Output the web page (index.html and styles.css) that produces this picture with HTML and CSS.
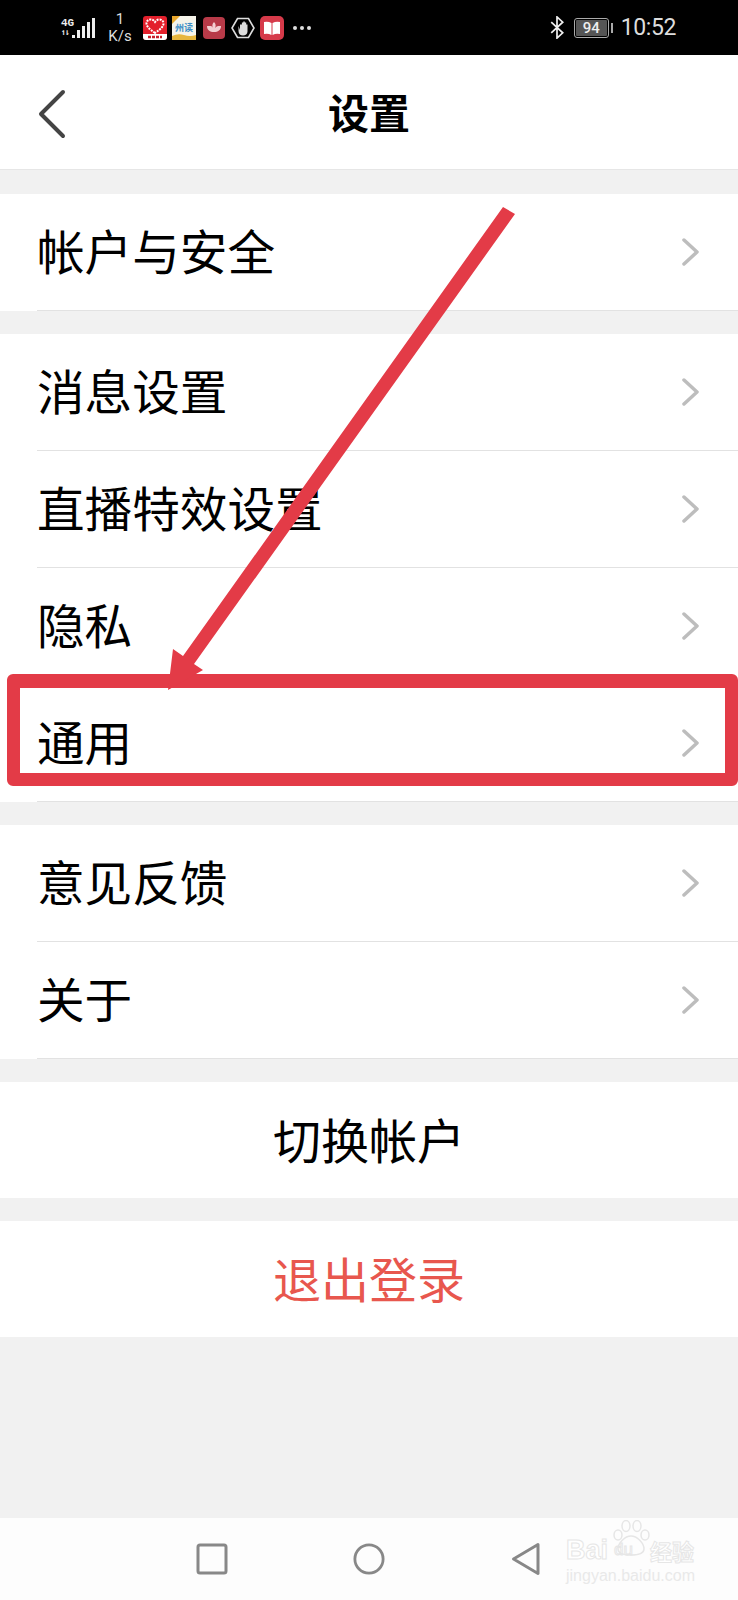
FILE: index.html
```html
<!DOCTYPE html>
<html>
  <head>
    <title>设置</title>
    <link rel="stylesheet" href="styles.css">
  </head>
  <body>
    <div class="phone">
      <div class="status">
        <div class="status-left">
          <div class="signal">
            <div class="net"><span>4G</span><span class="updown">↿⇂</span></div>
            <div class="bars"><i class="b1"></i><i class="b2"></i><i class="b3"></i><i class="b4"></i><i class="b5"></i></div>
          </div>
          <div class="speed"><span>1</span><span>K/s</span></div>
          <div class="apps">
            <svg class="app" viewBox="0 0 24 24"><rect width="24" height="24" rx="3" fill="#e3202c"/><path d="M0 18h24v3a3 3 0 0 1-3 3H3a3 3 0 0 1-3-3z" fill="#fff"/><path d="M12 17C6 13 3.500 10 3.500 7.500 3.500 5 5.500 3.500 7.500 3.500c2 0 3.500 1 4.500 2.500 1-1.500 2.500-2.500 4.500-2.500 2 0 4 1.500 4 4C20.500 10 18 13 12 17z" fill="none" stroke="#fff" stroke-width="2" stroke-dasharray="2 1"/><path d="M5 21h14" stroke="#c9202c" stroke-width="2.500" stroke-dasharray="3 1"/></svg>
            <svg class="app" viewBox="0 0 24 24"><rect width="24" height="24" fill="#f6f4ea"/><path d="M0 0h8L0 8z" fill="#e8a72c"/><text x="12" y="15" class="app-text">州读</text><path d="M0 24v-4q6-3 12-1t12 0v5z" fill="#e6b63e"/></svg>
            <svg class="app app-small" viewBox="0 0 22 22"><rect width="22" height="22" rx="4" fill="#b83a48"/><path d="M11 5c2 2 2 4 1 6 2-2 3-2 4-2 0 0 1 0 2 0 0 4-3 6-7 6s-7-2-7-6c1 0 2 0 3 0 1 0 2 0 3 2-1-2-1-4 1-6z" fill="#f3cfd2"/></svg>
            <svg class="app" viewBox="0 0 24 24"><path d="M6.500 2.500h11L23 12l-5.500 9.500h-11L1 12z" fill="none" stroke="#ddd" stroke-width="1.600"/><path d="M7.500 10v5c0 3 2 4.500 4.500 4.500s4.500-1.500 4.500-4V8.500h-1.300V13V6.500h-1.400V12V5.500h-1.500V12V6.500h-1.400V13V8.500H9V14z" fill="#ddd"/></svg>
            <svg class="app" viewBox="0 0 24 24"><rect width="24" height="24" rx="5" fill="#d63a4a"/><path d="M4 6q4-1 7.500 1v12Q8 17 4 18zM20 6q-4-1-7.500 1v12q3.500-2 7.500-1z" fill="#fff"/></svg>
          </div>
          <div class="more"><i></i><i></i><i></i></div>
        </div>
        <div class="status-right">
          <svg class="bt" viewBox="0 0 14 24"><path d="M1 6.500l12 11L7 23V1l6 5.500-12 11" fill="none" stroke="#eee" stroke-width="1.800"/></svg>
          <div class="battery"><div class="level">94</div></div>
          <div class="cap"></div>
          <div class="clock">10:52</div>
        </div>
      </div>

      <div class="topbar">
        <svg class="back" viewBox="0 0 28 50"><path d="M25 3L3 25l22 22" fill="none" stroke="#444" stroke-width="4" stroke-linecap="round" stroke-linejoin="round"/></svg>
        <h1>设置</h1>
      </div>

      <div class="group first">
        <div class="row"><span>帐户与安全</span><svg class="chev" viewBox="0 0 18 28"><path d="M2 2l13 12L2 26"/></svg></div>
      </div>

      <div class="group">
        <div class="row"><span>消息设置</span><svg class="chev" viewBox="0 0 18 28"><path d="M2 2l13 12L2 26"/></svg></div>
        <div class="row"><span>直播特效设置</span><svg class="chev" viewBox="0 0 18 28"><path d="M2 2l13 12L2 26"/></svg></div>
        <div class="row"><span>隐私</span><svg class="chev" viewBox="0 0 18 28"><path d="M2 2l13 12L2 26"/></svg></div>
        <div class="row"><span>通用</span><svg class="chev" viewBox="0 0 18 28"><path d="M2 2l13 12L2 26"/></svg></div>
      </div>

      <div class="group">
        <div class="row"><span>意见反馈</span><svg class="chev" viewBox="0 0 18 28"><path d="M2 2l13 12L2 26"/></svg></div>
        <div class="row"><span>关于</span><svg class="chev" viewBox="0 0 18 28"><path d="M2 2l13 12L2 26"/></svg></div>
      </div>

      <div class="group">
        <div class="action">切换帐户</div>
      </div>

      <div class="group">
        <div class="action logout">退出登录</div>
      </div>

      <div class="filler"></div>

      <div class="navbar">
        <svg class="nav-icon" viewBox="0 0 32 32"><rect x="2" y="2" width="28" height="28" rx="2"/></svg>
        <svg class="nav-icon" viewBox="0 0 34 34"><circle cx="17" cy="17" r="15"/></svg>
        <svg class="nav-icon" viewBox="0 0 30 34"><path d="M27 2.500L2.500 17 27 31.500z" stroke-linejoin="round"/></svg>
      </div>

      <div class="watermark">
        <svg class="paw" viewBox="0 0 40 36"><g fill="none" stroke="#e6e6e6" stroke-width="1.500"><ellipse cx="7" cy="15" rx="4" ry="5"/><ellipse cx="15" cy="6" rx="4" ry="5.500"/><ellipse cx="26" cy="6" rx="4" ry="5.500"/><ellipse cx="34" cy="15" rx="4" ry="5"/><path d="M20 16c6 0 13 7 13 13 0 5-6 6-13 6S7 34 7 29c0-6 7-13 13-13z"/></g></svg>
        <div class="wm-top"><span class="wm-bai">Bai</span><span class="wm-du">du</span><span class="wm-cn">经验</span></div>
        <div class="wm-bottom">jingyan.baidu.com</div>
      </div>

      <div class="highlight"></div>
      <svg class="arrow" viewBox="0 0 738 1600"><polygon points="503,207 515,214 194,664 203,670 168,690 173,649 183,656" fill="#e33b47"/></svg>
    </div>
  </body>
</html>
```

FILE: styles.css
```css
body {
  margin: 0;
  background-color: #f1f1f1;
  font-family: "Noto Sans CJK SC", "Liberation Sans", sans-serif;
}

.phone {
  position: relative;
  width: 738px;
  height: 1600px;
  display: flex;
  flex-direction: column;
  overflow: hidden;
}

/* status bar */
.status {
  height: 55px;
  background-color: #000;
  color: #ddd;
  display: flex;
  justify-content: space-between;
  align-items: center;
  padding: 0 62px 0 61px;
  flex-shrink: 0;
}

.status-left, .status-right, .signal, .apps, .more {
  display: flex;
  align-items: center;
}

.net {
  display: flex;
  flex-direction: column;
  font: bold 11px/11px "Liberation Mono", monospace;
  width: 11px;
  color: #eee;
}

.updown {
  font-size: 9px;
  line-height: 9px;
  letter-spacing: -2px;
}

.bars {
  display: flex;
  align-items: flex-end;
  gap: 2px;
  height: 20px;
  margin-top: 1px;
}

.bars i {
  width: 3px;
  background-color: #eee;
}

.bars .b1 { height: 3px; }
.bars .b2 { height: 8px; }
.bars .b3 { height: 12px; }
.bars .b4 { height: 16px; }
.bars .b5 { height: 20px; }

.speed {
  display: flex;
  flex-direction: column;
  align-items: center;
  font: 15px/17px "Roboto", sans-serif;
  width: 24px;
  margin-left: 13px;
}

.apps {
  gap: 5px;
  margin-left: 11px;
}

.app {
  width: 24px;
  height: 24px;
}

.app-small {
  width: 22px;
  height: 22px;
  margin: 0 1px 0 2px;
}

.app-text {
  font-size: 9px;
  font-weight: bold;
  fill: #3d8ec6;
  text-anchor: middle;
}

.more {
  gap: 3px;
  margin-left: 9px;
}

.more i {
  width: 4px;
  height: 4px;
  border-radius: 50%;
  background-color: #ddd;
}

.bt {
  width: 14px;
  height: 23px;
  margin-right: 10px;
}

.battery {
  width: 35px;
  height: 20px;
  border: 1px solid #aaa;
  border-radius: 3px;
  padding: 1px;
  box-sizing: border-box;
}

.level {
  height: 100%;
  background-color: #555;
  color: #eee;
  font: 500 15px/16px "Roboto", sans-serif;
  text-align: center;
  border-radius: 1px;
}

.cap {
  width: 2px;
  height: 10px;
  background-color: #aaa;
  margin: 0 8px 0 2px;
}

.clock {
  font: 23px/24px "Roboto", sans-serif;
  letter-spacing: -0.4px;
  color: #ddd;
}

/* header */
.topbar {
  height: 114px;
  background-color: #fff;
  border-bottom: 1px solid #e6e6e6;
  display: flex;
  align-items: center;
  justify-content: center;
  position: relative;
  flex-shrink: 0;
}

.topbar h1 {
  margin: 0 0 2px;
  font-size: 41px;
  font-weight: bold;
  line-height: 1;
  color: #000;
}

.back {
  position: absolute;
  left: 38px;
  top: 34px;
  width: 28px;
  height: 50px;
}

/* list */
.group {
  margin-top: 23px;
  background-color: #fff;
  flex-shrink: 0;
}

.group.first {
  margin-top: 24px;
}

.row {
  height: 117px;
  margin-left: 37px;
  padding-right: 38px;
  box-sizing: border-box;
  border-bottom: 1px solid #e2e2e2;
  display: flex;
  align-items: center;
  justify-content: space-between;
  font-size: 47.6px;
  color: #000;
}

.row span {
  line-height: 1;
  margin-bottom: 5px;
}

.chev {
  width: 18px;
  height: 28px;
}

.chev path {
  fill: none;
  stroke: #bdbdbd;
  stroke-width: 3.500;
  stroke-linecap: round;
  stroke-linejoin: round;
}

.action {
  height: 116px;
  padding-bottom: 5px;
  box-sizing: border-box;
  display: flex;
  align-items: center;
  justify-content: center;
  font-size: 48px;
  color: #000;
}

.logout {
  color: #e8574e;
}

.filler {
  flex: 1;
}

/* bottom nav */
.navbar {
  height: 82px;
  background-color: #fdfdfd;
  display: flex;
  align-items: center;
  gap: 125px;
  padding-left: 196px;
  box-sizing: border-box;
  flex-shrink: 0;
}

.nav-icon {
  width: 32px;
  height: 34px;
  fill: none;
  stroke: #888;
  stroke-width: 3;
}

/* things laid over the page */
.watermark {
  position: absolute;
  left: 566px;
  top: 1520px;
  width: 131px;
  color: #fff;
  font-family: "Liberation Sans", "Noto Sans CJK SC", sans-serif;
}

.paw {
  position: absolute;
  left: 45px;
  top: 0;
  width: 40px;
  height: 36px;
}

.wm-top {
  display: flex;
  align-items: center;
  margin-top: 17px;
  height: 26px;
  white-space: nowrap;
  -webkit-text-stroke: 1px #e6e6e6;
}

.wm-bai {
  font-size: 27px;
  font-weight: bold;
  width: 48px;
}

.wm-du {
  font-size: 17px;
  width: 36px;
}

.wm-cn {
  font-size: 22px;
  font-weight: bold;
}

.wm-bottom {
  margin-top: 4px;
  color: #e9e9e9;
  font-size: 16px;
  line-height: 18px;
  white-space: nowrap;
}

.highlight {
  position: absolute;
  left: 7px;
  top: 674px;
  width: 731px;
  height: 112px;
  box-sizing: border-box;
  border: 13px solid #e33b47;
  border-top-width: 14px;
  border-radius: 6px;
}

.arrow {
  position: absolute;
  left: 0;
  top: 0;
  width: 738px;
  height: 1600px;
}
```
